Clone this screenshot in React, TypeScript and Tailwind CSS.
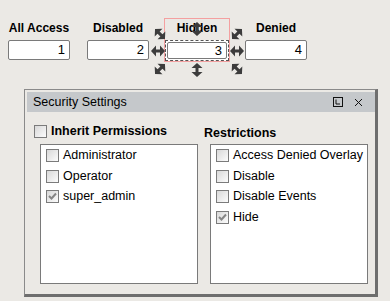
import React from 'react';

const font = { fontFamily: '"Liberation Sans", Arial, sans-serif' };

// double-headed arrow handle, rotated per position
const Handle = ({ angle, className }: { angle: number; className: string }) => (
  <svg className={`absolute ${className}`} width="14" height="14" viewBox="0 0 14 14">
    <g transform={`rotate(${angle} 7 7)`}>
      <path d="M0 7 L5 1.5 L5 5.5 L9 5.5 L9 1.5 L14 7 L9 12.5 L9 8.5 L5 8.5 L5 12.5 Z" fill="#3c3c3c" />
    </g>
  </svg>
);

const CheckBox = ({ checked }: { checked?: boolean }) => (
  <span className="relative inline-block w-[13px] h-[13px] border border-[#7b7b7b] bg-gradient-to-br from-[#d8d8d8] to-[#fcfcfc] shrink-0">
    {checked && (
      <svg className="absolute left-[1px] top-[1px]" width="9" height="9" viewBox="0 0 9 9">
        <path d="M1 4 L3.5 6.5 L8 1.5" stroke="#858585" strokeWidth="2" fill="none" />
      </svg>
    )}
  </span>
);

const Field = ({ label, value, className = '' }: { label: string; value: string; className?: string }) => (
  <div className={`flex flex-col items-center ${className}`}>
    <div className="font-bold text-[12px] leading-[14px] h-[14px] text-black">{label}</div>
    <div className="mt-[5px] w-[62px] h-[20px] border border-[#7a7a7a] rounded-[2px] bg-white text-[13px] leading-[18px] text-right pr-[4px]">
      {value}
    </div>
  </div>
);

const List = ({ items }: { items: { label: string; checked?: boolean }[] }) => (
  <div className="w-[158px] h-[140px] bg-white border border-[#7a7a7a] pl-[5px]">
    {items.map((it) => (
      <div key={it.label} className="flex items-center gap-[4px] h-[20.7px] text-[12.5px] text-black">
        <CheckBox checked={it.checked} />
        <span>{it.label}</span>
      </div>
    ))}
  </div>
);

export default function App() {
  return (
    <div className="w-[390px] h-[301px] bg-[#ebe9e5] overflow-hidden" style={font}>
      <div className="flex pt-[21px] pl-[8px]">
        <Field label="All Access" value="1" />
        <Field label="Disabled" value="2" className="ml-[17px]" />
        <div className="relative flex flex-col items-center ml-[16px]">
          <div className="absolute left-[-1px] top-[-3px] w-[66px] h-[44px] border border-[#f4a0a0]" />
          <div className="font-bold text-[12px] leading-[14px] h-[14px] text-black">Hidden</div>
          <div className="mt-[5px] w-[64px] h-[21px] border border-dashed border-[#555] bg-white p-[1px]">
            <div className="w-full h-full border border-[#7a7a7a] rounded-[2px] text-[13px] leading-[16px] text-right pr-[4px]">3</div>
          </div>
          <Handle angle={45} className="left-[-12px] top-[6px]" />
          <Handle angle={90} className="left-[25px] top-[1px]" />
          <Handle angle={-45} className="left-[65px] top-[6px]" />
          <Handle angle={0} className="left-[-14px] top-[23px]" />
          <Handle angle={0} className="left-[65px] top-[23px]" />
          <Handle angle={-45} className="left-[-12px] top-[41px]" />
          <Handle angle={90} className="left-[25px] top-[42px]" />
          <Handle angle={45} className="left-[65px] top-[41px]" />
        </div>
        <Field label="Denied" value="4" className="ml-[16px]" />
      </div>

      <div className="ml-[24px] mt-[28px] w-[354px] h-[208px] border-l border-t border-[#8a8a8a] border-r-[3px] border-b-[3px] border-r-[#6e6e6e] border-b-[#6e6e6e] pt-[2px] pl-[2px]">
        <div className="flex items-center h-[20px] bg-[#c5c8cb] pl-[6px] pr-[12px] text-[12.5px] text-black">
          <span className="flex-1">Security Settings</span>
          <svg width="10" height="10" viewBox="0 0 10 10" className="mr-[11px]">
            <rect x="0.5" y="0.5" width="9" height="9" fill="none" stroke="#111" />
            <path d="M3 2.5 V7 H7" stroke="#111" fill="none" />
          </svg>
          <svg width="9" height="9" viewBox="0 0 9 9">
            <path d="M1 1 L8 8 M8 1 L1 8" stroke="#111" strokeWidth="1" />
          </svg>
        </div>
        <div className="flex pl-[7px] gap-[6px]">
          <div className="w-[164px] flex flex-col">
            <div className="flex items-center gap-[4px] h-[16px] mt-[11px] font-bold text-[12.5px] text-black">
              <CheckBox />
              <span>Inherit Permissions</span>
            </div>
            <div className="mt-[5px] pl-[6px] flex">
              <List items={[{ label: 'Administrator' }, { label: 'Operator' }, { label: 'super_admin', checked: true }]} />
            </div>
          </div>
          <div className="w-[164px] flex flex-col">
            <div className="h-[16px] mt-[13px] font-bold text-[12.5px] text-black leading-[16px]">Restrictions</div>
            <div className="mt-[3px] pl-[6px] flex">
              <List
                items={[
                  { label: 'Access Denied Overlay' },
                  { label: 'Disable' },
                  { label: 'Disable Events' },
                  { label: 'Hide', checked: true },
                ]}
              />
            </div>
          </div>
        </div>
      </div>
    </div>
  );
}
